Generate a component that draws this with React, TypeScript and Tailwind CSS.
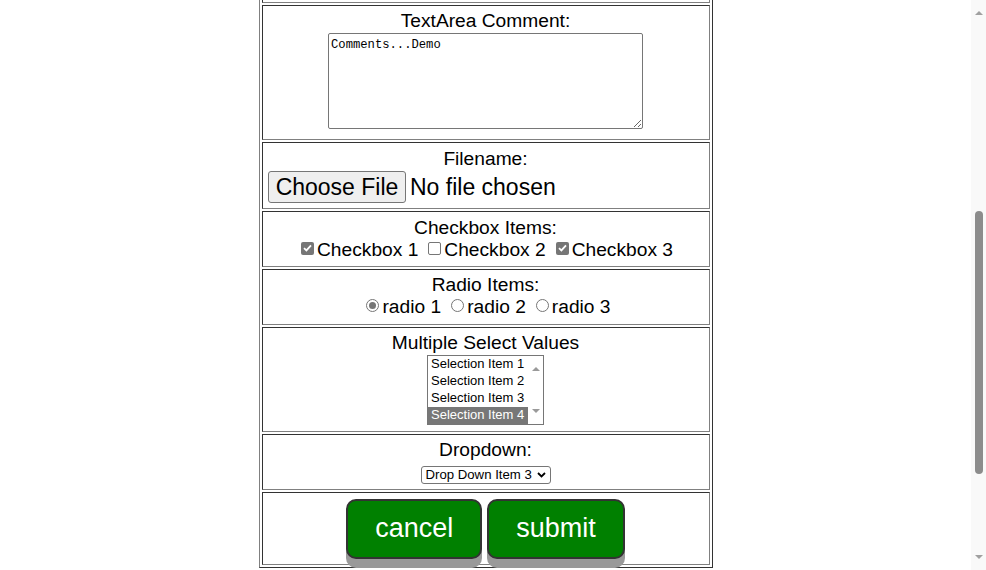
import React from "react";

const cell =
  "border border-t-[#333] border-l-[#333] border-b-[#808080] border-r-[#808080] flex flex-col items-center";
const label = "text-[19.2px] leading-[22px]";

function CheckBox({ checked }: { checked?: boolean }) {
  if (!checked) {
    return <span className="mb-[4px] h-[13px] w-[13px] shrink-0 rounded-[2px] border border-[#767676] bg-white" />;
  }
  return (
    <span className="mb-[4px] flex h-[13px] w-[13px] shrink-0 items-center justify-center rounded-[2px] bg-[#767676]">
      <svg width="9" height="8" viewBox="0 0 9 8">
        <path d="M1 4.2 L3.4 6.4 L8 1.4" fill="none" stroke="white" strokeWidth="1.8" />
      </svg>
    </span>
  );
}

function Radio({ checked }: { checked?: boolean }) {
  return (
    <span className="mb-[4px] flex h-[13px] w-[13px] shrink-0 items-center justify-center rounded-full border border-[#767676] bg-white">
      {checked && <span className="h-[7px] w-[7px] rounded-full bg-[#767676]" />}
    </span>
  );
}

function UpArrow({ color }: { color: string }) {
  return (
    <svg width="8" height="4" viewBox="0 0 8 4">
      <path d="M0 4 L4 0 L8 4 Z" fill={color} />
    </svg>
  );
}

function DownArrow({ color }: { color: string }) {
  return (
    <svg width="8" height="4" viewBox="0 0 8 4">
      <path d="M0 0 L8 0 L4 4 Z" fill={color} />
    </svg>
  );
}

export default function App() {
  const checks = [
    { name: "Checkbox 1", on: true },
    { name: "Checkbox 2", on: false },
    { name: "Checkbox 3", on: true },
  ];
  const radios = ["radio 1", "radio 2", "radio 3"];
  const options = ["Selection Item 1", "Selection Item 2", "Selection Item 3", "Selection Item 4"];

  return (
    <div className="flex h-[570px] w-[986px] overflow-hidden bg-white font-['Liberation_Sans',Arial,sans-serif] text-black">
      <div className="flex w-[971px] justify-center">
        <div className="flex h-[568px] w-[454px] flex-col gap-[2px] border border-t-0 border-l-[#808080] border-r-[#333] border-b-[#333] px-[2px] pb-[2px]">
          {/* bottom of the row above */}
          <div className="h-[3px] border border-t-0 border-l-[#333] border-b-[#808080] border-r-[#808080]" />

          <div className={`${cell} h-[135px] pt-[4px]`}>
            <div className={label}>TextArea Comment:</div>
            <textarea
              defaultValue="Comments...Demo"
              className="mt-[1px] h-[96px] w-[315px] rounded-[2px] border border-[#767676] px-[2px] pt-[4px] pb-[2px] font-['Liberation_Mono',monospace] text-[12.2px] leading-[15px] outline-none"
            />
          </div>

          <div className={`${cell} h-[67px] pt-[5px]`}>
            <div className={label}>Filename:</div>
            <div className="flex w-[435px] items-center text-[23px]">
              <span className="flex h-[32px] w-[138px] items-center justify-center rounded-[3px] border border-[#767676] bg-[#efefef]">
                Choose File
              </span>
              <span className="ml-[4px]">No file chosen</span>
            </div>
          </div>

          <div className={`${cell} h-[56px] pt-[5px]`}>
            <div className={label}>Checkbox Items:</div>
            <div className={`${label} ml-[3px] flex items-center gap-[10px]`}>
              {checks.map((c) => (
                <span key={c.name} className="flex items-center gap-[3px]">
                  <CheckBox checked={c.on} />
                  <span>{c.name}</span>
                </span>
              ))}
            </div>
          </div>

          <div className={`${cell} h-[56px] pt-[4px]`}>
            <div className={label}>Radio Items:</div>
            <div className={`${label} ml-[6px] flex items-center gap-[10px]`}>
              {radios.map((r, i) => (
                <span key={r} className="flex items-center gap-[3px]">
                  <Radio checked={i === 0} />
                  <span>{r}</span>
                </span>
              ))}
            </div>
          </div>

          <div className={`${cell} h-[105px] pt-[4px]`}>
            <div className={label}>Multiple Select Values</div>
            <div className="mt-[1px] flex h-[70px] w-[117px] border border-[#767676] bg-white text-[13px]">
              <div className="flex w-[100px] flex-col">
                {options.map((o, i) => (
                  <div
                    key={o}
                    className={`h-[17px] pl-[3px] leading-[16px] whitespace-nowrap ${
                      i === 3 ? "bg-[#777] text-white" : ""
                    }`}
                  >
                    {o}
                  </div>
                ))}
              </div>
              <div className="flex w-[15px] flex-col items-center justify-between py-[11px]">
                <UpArrow color="#9a9a9a" />
                <DownArrow color="#9a9a9a" />
              </div>
            </div>
          </div>

          <div className={`${cell} h-[56px] pt-[4px]`}>
            <div className={label}>Dropdown:</div>
            <div className="mt-[5px] flex h-[18px] w-[130px] items-center justify-between rounded-[3px] border border-[#767676] pl-[4px] pr-[4px] text-[13.2px]">
              <span className="whitespace-nowrap">Drop Down Item 3</span>
              <svg width="9" height="6" viewBox="0 0 9 6">
                <path d="M1 1 L4.5 4.5 L8 1" fill="none" stroke="black" strokeWidth="1.8" />
              </svg>
            </div>
          </div>

          <div className={`${cell} h-[73px] flex-row justify-center gap-[5px]`}>
            <button className="flex h-[60px] items-center rounded-[10px] border-2 border-[#333] bg-[#008000] px-[27px] text-[27px] text-white shadow-[0_9px_0_#999]">
              cancel
            </button>
            <button className="flex h-[60px] items-center rounded-[10px] border-2 border-[#333] bg-[#008000] px-[27px] text-[27px] text-white shadow-[0_9px_0_#999]">
              submit
            </button>
          </div>
        </div>
      </div>

      {/* page scrollbar */}
      <div className="flex w-[15px] flex-col items-center bg-[#f9f9f9] pt-[11px]">
        <UpArrow color="#a0a0a0" />
        <div className="mt-[196px] h-[263px] w-[8px] rounded-full bg-[#8c8c8c]" />
        <div className="mt-[81px]">
          <DownArrow color="#a0a0a0" />
        </div>
      </div>
    </div>
  );
}
